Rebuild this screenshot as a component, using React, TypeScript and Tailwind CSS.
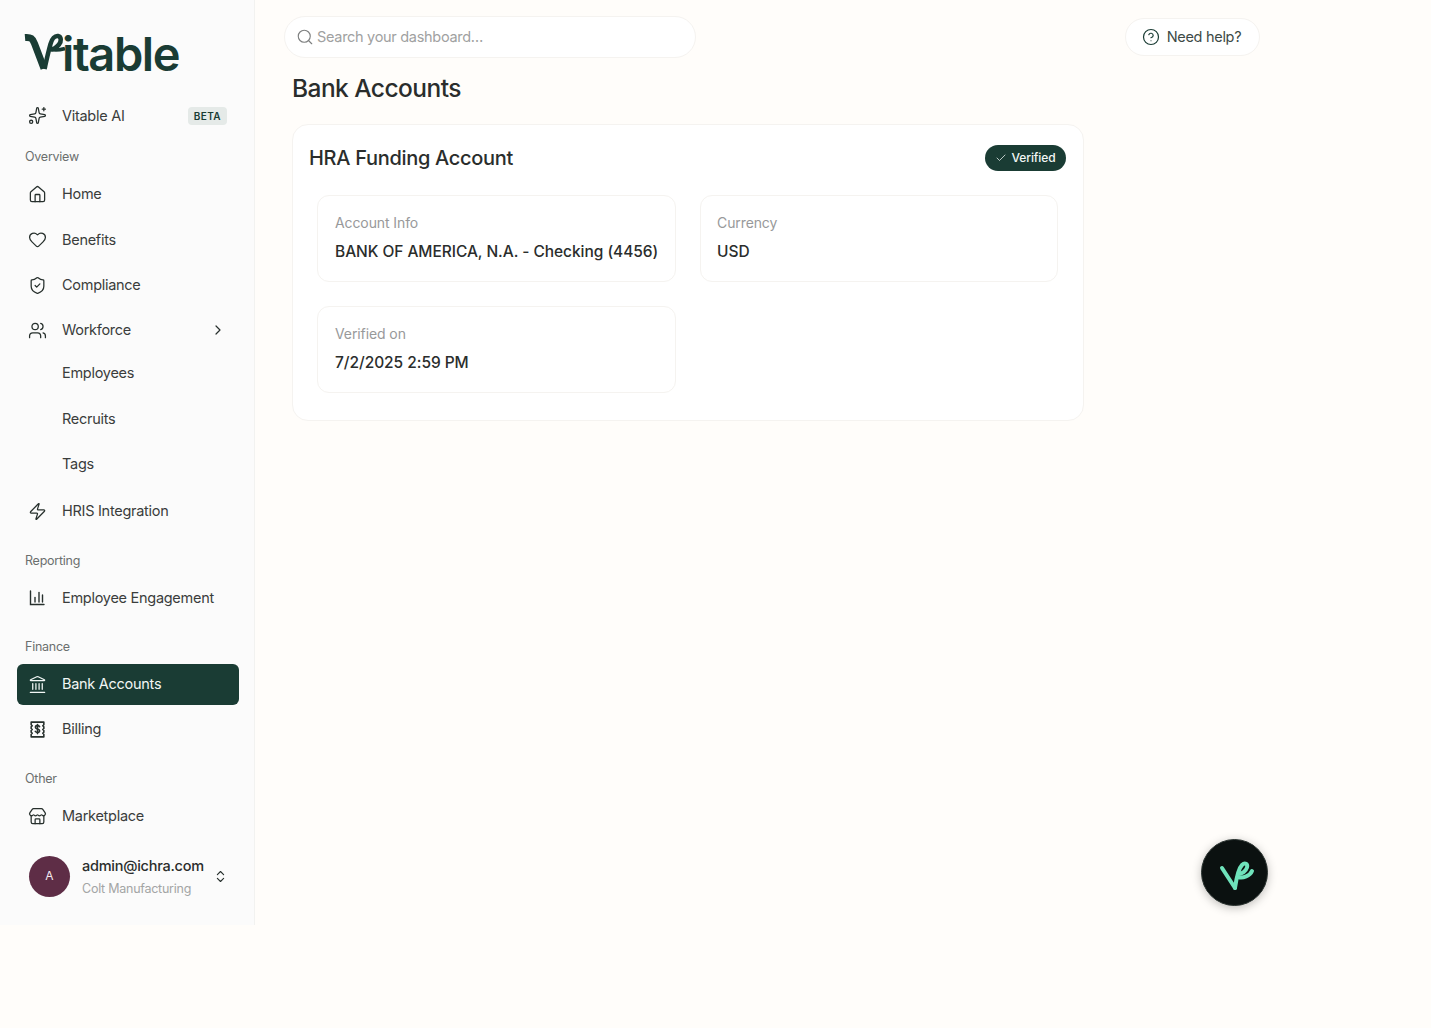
import React from "react";
import { Sparkles, House, Heart, ShieldCheck, Users, ChevronRight, Zap, Landmark, Store, ChevronsUpDown, Search, CircleHelp, Check } from "lucide-react";

const FONT = "[font-family:Inter,'Liberation_Sans',sans-serif]";

function ChartIcon() {
  return (
    <svg width="16" height="16" viewBox="0 0 16 16" fill="none" stroke="currentColor" strokeWidth="1.4" strokeLinecap="round">
      <path d="M1.5 1V14.5H15" />
      <path d="M6 7.5V12" />
      <path d="M10 2.5V12" />
      <path d="M13.5 5V12" />
    </svg>
  );
}

function BillIcon() {
  return (
    <svg width="19" height="19" viewBox="0 0 18 18" fill="none" stroke="currentColor" strokeWidth="1.5" strokeLinejoin="round" strokeLinecap="round">
      <path d="M3 2H15V4.5L14 5.5L15 6.5V8L14 9L15 10V11.5L14 12.5L15 13.5V16H3V13.5L4 12.5L3 11.5V10L4 9L3 8V6.5L4 5.5L3 4.5Z" />
      <path d="M11 6.3C10.5 5.6 9.8 5.3 9 5.3C7.8 5.3 7 5.9 7 6.9C7 9 11 7.9 11 10.2C11 11.2 10.1 11.8 9 11.8C8.1 11.8 7.4 11.5 6.9 10.8" />
      <path d="M9 4.3V12.9" />
    </svg>
  );
}

function LogoMark() {
  return (
    <svg width="45" height="44" viewBox="0 0 45 44" fill="none" stroke="#1a3c34" strokeLinejoin="round" className="shrink-0">
      <path d="M5 9.5C11 9 12.5 10.5 14.5 15.5L24 40.5" strokeWidth="7" />
      <path d="M24.5 41C26.5 32 28 25 30.5 16C32 10.5 35 7.5 38 8C41.5 8.8 41.5 13.5 39 16.5C36.5 19.5 33 21.5 30 21.5" strokeWidth="4.6" />
      <path d="M30 21C34 22.5 40 22 45 20.5" strokeWidth="3.6" />
    </svg>
  );
}

function Item({ icon, label, active, right, className = "" }: { icon?: React.ReactNode; label: string; active?: boolean; right?: React.ReactNode; className?: string }) {
  return (
    <div className={`flex h-[41px] items-center rounded-md pl-[10px] pr-[12px] text-[14.5px] tracking-[-0.28px] ${active ? "bg-[#1a3c34] text-[#f2f7f5]" : "text-[#3a3d3c]"} ${className}`}>
      <span className={`flex w-[20px] justify-center ${active ? "text-[#f2f7f5]" : "text-[#27302d]"}`}>{icon}</span>
      <span className="ml-[15px]">{label}</span>
      {right && <span className="ml-auto flex items-center">{right}</span>}
    </div>
  );
}

function Label({ children, className = "" }: { children: React.ReactNode; className?: string }) {
  return <div className={`h-5 pl-2 text-[12.5px] leading-5 tracking-[-0.25px] text-[#6b6f6e] ${className}`}>{children}</div>;
}

function Field({ label, value, inset = "pl-[1px]" }: { label: string; value: string; inset?: string }) {
  return (
    <div className="flex h-[87px] flex-col rounded-xl border border-[#f5f3f0] bg-white px-[16px] pt-[17px]">
      <span className={`${inset} text-[14px] leading-5 tracking-[-0.1px] text-[#98999a]`}>{label}</span>
      <span className={`${inset} mt-[7px] whitespace-nowrap text-[15.5px] font-medium leading-6 tracking-[-0.05px] text-[#2a2d2c]`}>{value}</span>
    </div>
  );
}

export default function App() {
  const ic = { size: 19, strokeWidth: 1.6 };
  return (
    <div className={`relative flex min-h-[1028px] items-start bg-[#fffdfa] ${FONT}`}>
      <aside className="h-[925px] w-[255px] shrink-0 border-r border-[#f2f2f0] bg-[#fbfbfb] pl-[17px] pr-[15px]">
        <div className="flex h-[95px] items-start pt-[28px] pl-[3px]">
          <LogoMark />
          <span className="-ml-[3px] mt-[4px] text-[47px] font-semibold leading-[44px] tracking-[-1.4px] text-[#1a3c34]">itable</span>
        </div>
        <Item
          icon={<Sparkles {...ic} />}
          label="Vitable AI"
          right={<span className="rounded bg-[#e5eae8] px-[6px] text-[10px] font-semibold leading-[18px] tracking-[0.4px] text-[#1a3c34]">BETA</span>}
        />
        <Label className="mt-[11px]">Overview</Label>
        <div className="mt-[6.5px] flex flex-col gap-[4.5px]">
          <Item icon={<House {...ic} />} label="Home" />
          <Item icon={<Heart {...ic} />} label="Benefits" />
          <Item icon={<ShieldCheck {...ic} />} label="Compliance" />
          <Item icon={<Users {...ic} />} label="Workforce" className="-mt-[0.5px]" right={<ChevronRight size={16} strokeWidth={1.8} className="mr-[1px] text-[#27302d]" />} />
        </div>
        <Item label="Employees" className="mt-[2px]" />
        <Item label="Recruits" className="mt-[5px]" />
        <Item label="Tags" className="mt-[4px]" />
        <Item icon={<Zap {...ic} />} label="HRIS Integration" className="mt-[6px]" />
        <Label className="mt-[19.5px]">Reporting</Label>
        <Item icon={<ChartIcon />} label="Employee Engagement" className="mt-[6.5px]" />
        <Label className="mt-[18px]">Finance</Label>
        <Item icon={<Landmark {...ic} />} label="Bank Accounts" active className="mt-[7px]" />
        <Item icon={<BillIcon />} label="Billing" className="mt-[4px]" />
        <Label className="mt-[19.5px]">Other</Label>
        <Item icon={<Store {...ic} />} label="Marketplace" className="mt-[6.5px]" />
        <div className="mt-[17px] flex items-center pl-[12px]">
          <div className="flex h-[41px] w-[41px] items-center justify-center rounded-full bg-[#5e2d46] text-[12px] text-[#f3e9ee]">A</div>
          <div className="ml-[12px] flex flex-col pt-[2px]">
            <span className="text-[14.5px] font-medium leading-5 tracking-[-0.25px] text-[#2a2d2c]">admin@ichra.com</span>
            <span className="mt-[3px] text-[12.5px] leading-5 tracking-[-0.25px] text-[#a3a5a5]">Colt Manufacturing</span>
          </div>
          <ChevronsUpDown size={15} strokeWidth={1.8} className="ml-auto mr-[11px] text-[#27302d]" />
        </div>
      </aside>

      <main className="pl-[29px]">
        <div className="flex w-[976px] items-center justify-between pt-[16px]">
          <div className="flex h-[42px] w-[412px] items-center rounded-[21px] border border-[#f5f3f0] bg-white pl-[11px]">
            <Search size={18} strokeWidth={1.5} className="text-[#7d7f7f]" />
            <span className="ml-[3px] text-[14.5px] tracking-[-0.3px] text-[#a0a1a1]">Search your dashboard…</span>
          </div>
          <div className="flex h-[38px] w-[135px] items-center justify-center gap-[7px] rounded-[19px] border border-[#f5f3f0] bg-white pr-[2px] text-[14.5px] tracking-[-0.3px] text-[#3d4a46]">
            <CircleHelp size={18} strokeWidth={1.6} className="text-[#1a3c34]" />
            Need help?
          </div>
        </div>
        <div className="ml-[8px]">
          <h1 className="mt-[14px] text-[24.5px] font-medium leading-[33px] tracking-[-0.55px] text-[#2a2d2c]">Bank Accounts</h1>
          <section className="mt-[19px] h-[297px] w-[792px] rounded-2xl border border-[#f5f3f0] bg-white pl-[16px] pr-[17px] pt-[20px]">
            <div className="flex h-[26px] items-center justify-between">
              <h2 className="text-[20px] font-medium tracking-[-0.3px] text-[#2a2d2c]">HRA Funding Account</h2>
              <span className="flex h-[26px] w-[81px] items-center justify-center gap-[4px] rounded-full bg-[#1a3c34] text-[12px] font-medium tracking-[-0.1px] text-[#f2f7f5]">
                <Check size={12} strokeWidth={1.5} />
                Verified
              </span>
            </div>
            <div className="mt-[24px] grid grid-cols-[359px_358px] gap-x-[24px] gap-y-[24px] px-[8px]">
              <Field label="Account Info" value="BANK OF AMERICA, N.A. - Checking (4456)" />
              <Field label="Currency" value="USD" inset="" />
              <Field label="Verified on" value="7/2/2025 2:59 PM" />
            </div>
          </section>
        </div>
      </main>

      <div className="absolute left-[1201px] top-[839px] flex h-[67px] w-[67px] items-center justify-center rounded-full border border-[#2a3330] bg-[#0b1110] shadow-[0_2px_10px_rgba(0,0,0,0.25)]">
        <svg width="50" height="45" viewBox="0 -1 50 45" fill="none" stroke="#6fe3bb" strokeWidth="4" strokeLinejoin="round" strokeLinecap="round">
          <path d="M12 17L25 37" />
          <path d="M25 37C26 30 28 18 32 14C35 11 38 13 37 16.5C36 20 32 23 28 23" />
          <path d="M28 26C33 27.5 40 25 42 20" />
        </svg>
      </div>
    </div>
  );
}
